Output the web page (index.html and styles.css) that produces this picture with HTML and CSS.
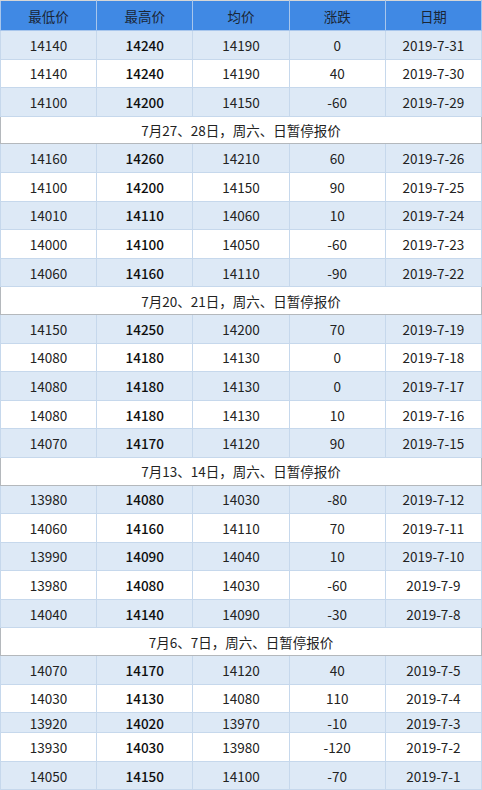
FILE: index.html
```html
<!DOCTYPE html>
<html lang="zh-CN">
<head>
<meta charset="utf-8">
<link rel="stylesheet" href="styles.css">
</head>
<body>
<table class="price-table">
  <colgroup><col class="c"><col class="c"><col class="c"><col class="c"><col class="c"></colgroup>
  <thead>
    <tr><th>最低价</th><th>最高价</th><th>均价</th><th>涨跌</th><th>日期</th></tr>
  </thead>
  <tbody>
    <tr class="alt"><td>14140</td><td class="b">14240</td><td>14190</td><td>0</td><td>2019-7-31</td></tr>
    <tr><td>14140</td><td class="b">14240</td><td>14190</td><td>40</td><td>2019-7-30</td></tr>
    <tr class="alt"><td>14100</td><td class="b">14200</td><td>14150</td><td>-60</td><td>2019-7-29</td></tr>
    <tr class="sep"><td colspan="5">7月27、28日，周六、日暂停报价</td></tr>
    <tr class="alt"><td>14160</td><td class="b">14260</td><td>14210</td><td>60</td><td>2019-7-26</td></tr>
    <tr><td>14100</td><td class="b">14200</td><td>14150</td><td>90</td><td>2019-7-25</td></tr>
    <tr class="alt"><td>14010</td><td class="b">14110</td><td>14060</td><td>10</td><td>2019-7-24</td></tr>
    <tr><td>14000</td><td class="b">14100</td><td>14050</td><td>-60</td><td>2019-7-23</td></tr>
    <tr class="alt"><td>14060</td><td class="b">14160</td><td>14110</td><td>-90</td><td>2019-7-22</td></tr>
    <tr class="sep"><td colspan="5">7月20、21日，周六、日暂停报价</td></tr>
    <tr class="alt"><td>14150</td><td class="b">14250</td><td>14200</td><td>70</td><td>2019-7-19</td></tr>
    <tr><td>14080</td><td class="b">14180</td><td>14130</td><td>0</td><td>2019-7-18</td></tr>
    <tr class="alt"><td>14080</td><td class="b">14180</td><td>14130</td><td>0</td><td>2019-7-17</td></tr>
    <tr><td>14080</td><td class="b">14180</td><td>14130</td><td>10</td><td>2019-7-16</td></tr>
    <tr class="alt"><td>14070</td><td class="b">14170</td><td>14120</td><td>90</td><td>2019-7-15</td></tr>
    <tr class="sep"><td colspan="5">7月13、14日，周六、日暂停报价</td></tr>
    <tr class="alt"><td>13980</td><td class="b">14080</td><td>14030</td><td>-80</td><td>2019-7-12</td></tr>
    <tr><td>14060</td><td class="b">14160</td><td>14110</td><td>70</td><td>2019-7-11</td></tr>
    <tr class="alt"><td>13990</td><td class="b">14090</td><td>14040</td><td>10</td><td>2019-7-10</td></tr>
    <tr><td>13980</td><td class="b">14080</td><td>14030</td><td>-60</td><td>2019-7-9</td></tr>
    <tr class="alt"><td>14040</td><td class="b">14140</td><td>14090</td><td>-30</td><td>2019-7-8</td></tr>
    <tr class="sep"><td colspan="5">7月6、7日，周六、日暂停报价</td></tr>
    <tr class="alt"><td>14070</td><td class="b">14170</td><td>14120</td><td>40</td><td>2019-7-5</td></tr>
    <tr><td>14030</td><td class="b">14130</td><td>14080</td><td>110</td><td>2019-7-4</td></tr>
    <tr class="alt short"><td>13920</td><td class="b">14020</td><td>13970</td><td>-10</td><td>2019-7-3</td></tr>
    <tr><td>13930</td><td class="b">14030</td><td>13980</td><td>-120</td><td>2019-7-2</td></tr>
    <tr class="alt"><td>14050</td><td class="b">14150</td><td>14100</td><td>-70</td><td>2019-7-1</td></tr>
  </tbody>
</table>
</body>
</html>
```
FILE: styles.css
```css
html, body {
  margin: 0;
  padding: 0;
  background: #ffffff;
}
.price-table {
  width: 482px;
  border-collapse: collapse;
  table-layout: fixed;
  font-family: "Noto Sans CJK SC", "Noto Sans", sans-serif;
  font-size: 13.5px;
  color: #222222;
}
.price-table col.c {
  width: 20%;
}
.price-table th {
  background: #4089e4;
  color: #1a2636;
  font-weight: normal;
  height: 29px;
  padding: 0;
  border: 1px solid #a8c6ec;
  border-top-color: #d6d6d6;
  text-align: center;
  vertical-align: middle;
}
.price-table td {
  height: 27.6px;
  padding: 0;
  border: 1px solid #c6d8ec;
  text-align: center;
  vertical-align: middle;
  line-height: 16px;
}
.price-table tr.alt td {
  background: #dde9f6;
}
.price-table td.b {
  font-weight: 500;
  color: #0e0e0e;
}
.price-table tr.short td {
  height: 19px;
}
.price-table tr.sep td {
  background: #ffffff;
  border: 1px solid #b4b8bc;
  height: 26.6px;
}
```
